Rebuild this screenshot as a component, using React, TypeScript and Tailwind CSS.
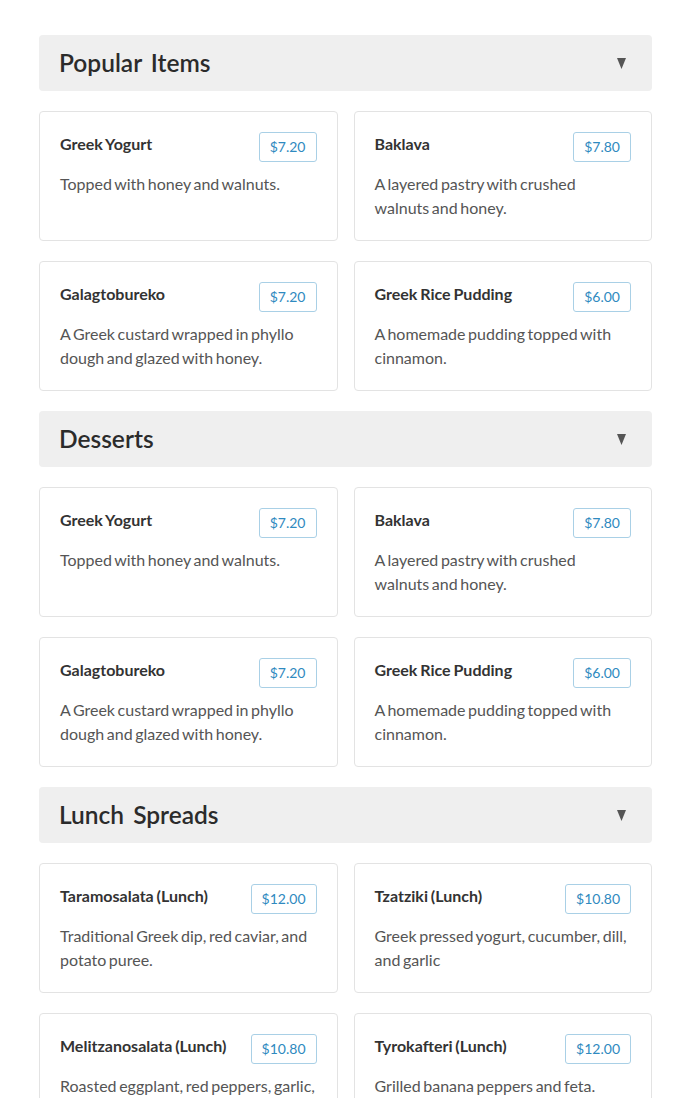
import React from 'react';

interface Item {
    name: string;
    price: string;
    description: string;
}

interface Section {
    title: string;
    items: Item[];
}

const desserts: Item[] = [
    { name: 'Greek Yogurt', price: '$7.20', description: 'Topped with honey and walnuts.' },
    { name: 'Baklava', price: '$7.80', description: 'A layered pastry with crushed walnuts and honey.' },
    { name: 'Galagtobureko', price: '$7.20', description: 'A Greek custard wrapped in phyllo dough and glazed with honey.' },
    { name: 'Greek Rice Pudding', price: '$6.00', description: 'A homemade pudding topped with cinnamon.' },
];

const sections: Section[] = [
    { title: 'Popular Items', items: desserts },
    { title: 'Desserts', items: desserts },
    {
        title: 'Lunch Spreads',
        items: [
            { name: 'Taramosalata (Lunch)', price: '$12.00', description: 'Traditional Greek dip, red caviar, and potato puree.' },
            { name: 'Tzatziki (Lunch)', price: '$10.80', description: 'Greek pressed yogurt, cucumber, dill, and garlic' },
            { name: 'Melitzanosalata (Lunch)', price: '$10.80', description: 'Roasted eggplant, red peppers, garlic, and olive oil.' },
            { name: 'Tyrokafteri (Lunch)', price: '$12.00', description: 'Grilled banana peppers and feta.' },
        ],
    },
];

const MenuCard: React.FC<{ item: Item }> = ({ item }) => (
    <div className="rounded border border-[#e3e3e3] bg-white p-5">
        {/* Name + price */}
        <div className="mb-2.5 flex items-start justify-between gap-3">
            <h3 className="text-base leading-6 font-bold text-[#333] [word-spacing:-1px]">{item.name}</h3>
            <span className="shrink-0 rounded-[3px] border border-[#a9d0e6] px-2.5 py-1 text-sm leading-5 text-[#2f8ac0]">
                {item.price}
            </span>
        </div>
        <p className="text-base leading-6 text-[#555] [word-spacing:-1.5px]">{item.description}</p>
    </div>
);

export default function App() {
    return (
        <div className="min-h-screen bg-white pt-[35px] pr-[38px] pb-10 pl-[39px] font-['Lato',sans-serif]">
            {sections.map((section) => (
                <section key={section.title} className="mb-5">
                    {/* Header */}
                    <div className="mb-5 flex h-14 items-center justify-between rounded bg-[#efefef] px-5">
                        <h2 className="text-[24.5px] font-semibold text-[#2b2b2b] [word-spacing:3px]">{section.title}</h2>
                        <svg width="9" height="11" viewBox="0 0 9 11" className="mr-[6px]">
                            <polygon points="0,0 9,0 4.5,11" fill="#555" />
                        </svg>
                    </div>

                    {/* Items */}
                    <div className="grid grid-cols-2 gap-x-4 gap-y-5">
                        {section.items.map((item) => (
                            <MenuCard key={item.name} item={item} />
                        ))}
                    </div>
                </section>
            ))}
        </div>
    );
}
